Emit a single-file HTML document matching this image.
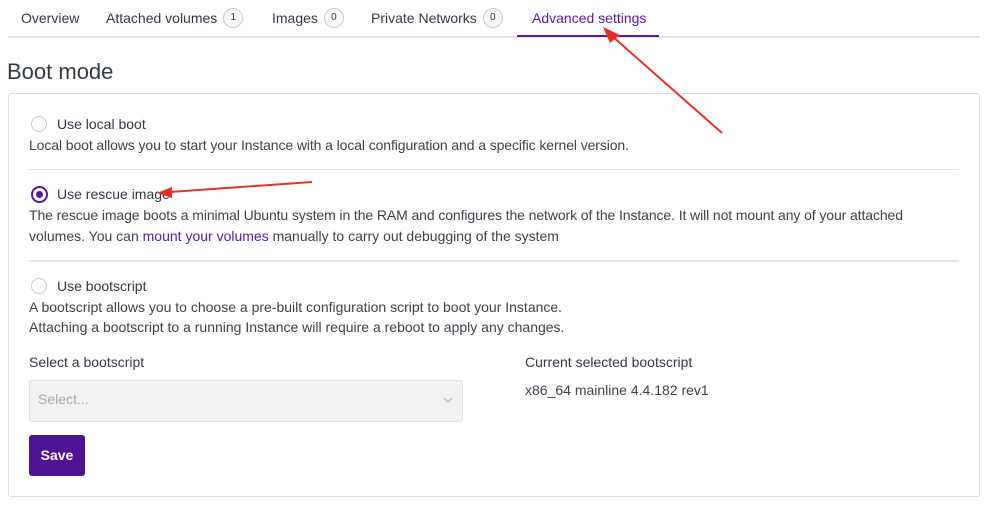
<!DOCTYPE html>
<html><head><meta charset="utf-8"><style>
body{margin:0;width:988px;height:514px;background:#fff;font-family:"Liberation Sans",sans-serif;color:#333845;position:relative;overflow:hidden}
.a{position:absolute;white-space:nowrap;font-size:14px;line-height:16px}
.tab{position:absolute;top:10px;font-size:14px;line-height:16px;color:#333845;white-space:nowrap}
.badge{display:inline-block;width:18px;height:18px;border:1px solid #ccc;border-radius:50%;font-size:10px;text-align:center;line-height:18px;margin-left:6px;vertical-align:middle;background:#f7f7f7;margin-top:-3px}
.radio{position:absolute;width:14px;height:14px;border:1.5px solid #c8c8c8;border-radius:50%;left:31px}
.hr{position:absolute;left:29px;width:930px;height:2px;background:#e3e3e3}
.d{color:#3d414a}
</style></head><body>
<div class="tab" style="left:21px">Overview</div>
<div class="tab" style="left:106px">Attached volumes<span class="badge">1</span></div>
<div class="tab" style="left:272px">Images<span class="badge">0</span></div>
<div class="tab" style="left:371px">Private Networks<span class="badge">0</span></div>
<div class="tab" style="left:532px;color:#5a16a0">Advanced settings</div>
<div style="position:absolute;left:8px;top:36px;width:972px;height:2px;background:#e2e2e8"></div>
<div style="position:absolute;left:517px;top:35px;width:142px;height:2px;background:#5a16a0"></div>
<div class="a" style="left:7px;top:60px;font-size:22px;line-height:24px;color:#333845">Boot mode</div>
<div style="position:absolute;left:8px;top:93px;width:970px;height:402px;border:1px solid #ddd;border-radius:3px"></div>

<div class="radio" style="top:116px"></div>
<div class="a" style="left:57px;top:116px">Use local boot</div>
<div class="a d" style="left:29px;top:137px;letter-spacing:-0.1px">Local boot allows you to start your Instance with a local configuration and a specific kernel version.</div>
<div class="hr" style="top:169px;height:1px"></div>

<div class="radio" style="top:186px;border:2px solid #5a16a0;width:13px;height:13px"><div style="position:absolute;left:3px;top:3px;width:7px;height:7px;border-radius:50%;background:#5a16a0"></div></div>
<div class="a" style="left:57px;top:186px">Use rescue image</div>
<div class="a d" style="left:29px;top:207px;letter-spacing:-0.1px">The rescue image boots a minimal Ubuntu system in the RAM and configures the network of the Instance. It will not mount any of your attached</div>
<div class="a d" style="left:29px;top:228px">volumes. You can <span style="color:#5a16a0">mount your volumes</span> manually to carry out debugging of the system</div>
<div class="hr" style="top:260px"></div>

<div class="radio" style="top:278px"></div>
<div class="a" style="left:57px;top:278px">Use bootscript</div>
<div class="a d" style="left:29px;top:299px">A bootscript allows you to choose a pre-built configuration script to boot your Instance.</div>
<div class="a d" style="left:29px;top:319px">Attaching a bootscript to a running Instance will require a reboot to apply any changes.</div>

<div class="a" style="left:29px;top:354px">Select a bootscript</div>
<div style="position:absolute;left:29px;top:380px;width:432px;height:40px;background:#f2f2f2;border:1px solid #e0e0e0;border-radius:3px"></div>
<div class="a" style="left:38px;top:391px;color:#aaa">Select...</div>
<svg style="position:absolute;left:443px;top:396px" width="10" height="8"><path d="M1 2l4 4 4-4" stroke="#bbb" fill="none" stroke-width="1.3"/></svg>
<div style="position:absolute;left:29px;top:435px;width:56px;height:41px;background:#4f1293;border-radius:3px;color:#fff;font-size:14px;font-weight:bold;text-align:center;line-height:41px">Save</div>

<div class="a" style="left:525px;top:354px">Current selected bootscript</div>
<div class="a d" style="left:525px;top:382px">x86_64 mainline 4.4.182 rev1</div>

<svg style="position:absolute;left:0;top:0" width="988" height="514">
<line x1="722" y1="133" x2="612" y2="36" stroke="#e8302a" stroke-width="2"/>
<polygon points="603,27 620,35 610,43" fill="#e8302a"/>
<line x1="312" y1="182" x2="170" y2="192" stroke="#e8302a" stroke-width="2"/>
<polygon points="157,193 172,187 172,198" fill="#e8302a"/>
</svg>
</body></html>
